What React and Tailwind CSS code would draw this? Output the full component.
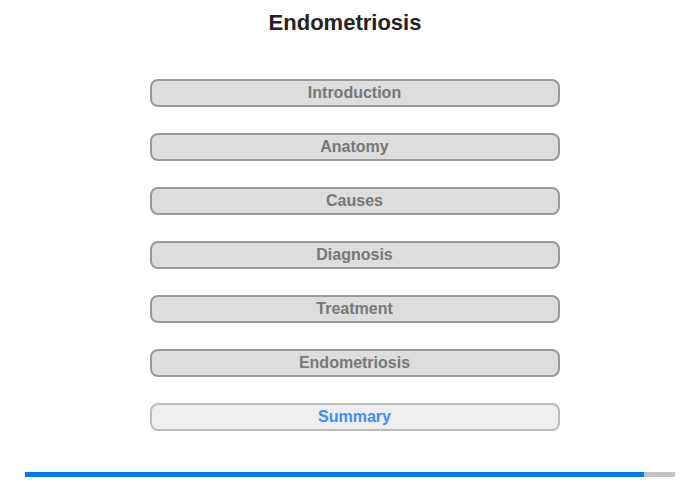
const sections = ['Introduction', 'Anatomy', 'Causes', 'Diagnosis', 'Treatment', 'Endometriosis'];

export default function App() {
  return (
    <div className="w-[700px] h-[480px] bg-white flex flex-col font-['Liberation_Sans',Arial,sans-serif]">
      <h1 className="mt-[10px] pr-[10px] h-[26px] leading-[26px] text-center text-[22px] font-bold text-[#222]">Endometriosis</h1>

      {/* Menu */}
      <div className="mt-[43px] flex flex-col items-center gap-[26px]">
        {sections.map((s) => (
          <button
            key={s}
            className="w-[410px] h-[28px] ml-[9px] rounded-[8px] border-2 border-[#999] bg-[#ddd] text-[16px] font-bold text-[#777] leading-none"
          >
            {s}
          </button>
        ))}
        <button className="w-[410px] h-[28px] ml-[9px] rounded-[8px] border-2 border-[#bbb] bg-[#eee] text-[16px] font-bold text-[#3b8cff] leading-none">
          Summary
        </button>
      </div>

      {/* Progress */}
      <div className="mt-auto mb-[3px] mx-[25px] h-[5px] bg-[#c3c3c3] flex">
        <div className="w-[619px] h-full bg-[#007bff]" />
      </div>
    </div>
  );
}
